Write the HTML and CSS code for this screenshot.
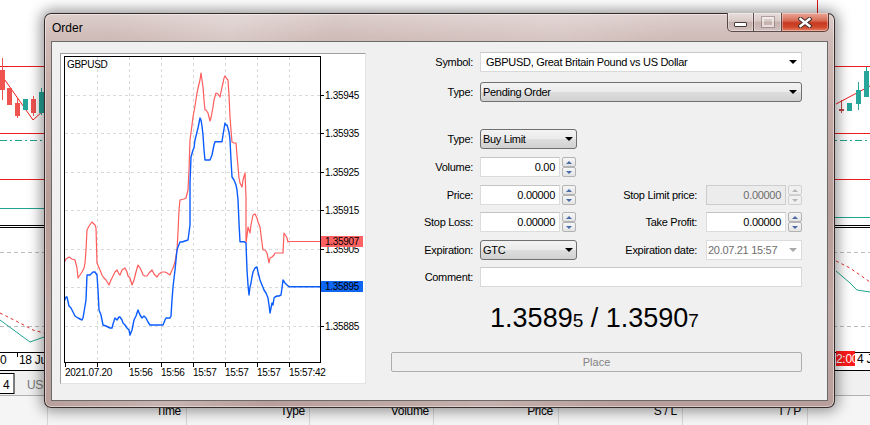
FILE: index.html
```html
<!DOCTYPE html>
<html>
<head>
<meta charset="utf-8">
<title>Order</title>
<link rel="stylesheet" href="styles.css">
</head>
<body>
<svg class="backdrop" width="870" height="425" viewBox="0 0 870 425">
  <rect width="870" height="425" fill="#fff"/>
  <line x1="817.5" y1="0" x2="817.5" y2="20" stroke="#e01515"/>
  <g stroke="#ee1c1c" fill="none">
    <line x1="0" y1="66.5" x2="870" y2="66.5"/>
    <line x1="0" y1="133.5" x2="870" y2="133.5"/>
    <line x1="0" y1="179.5" x2="870" y2="179.5"/>
    <polyline points="0,73 33,120 44,110"/>
    <polyline points="836,104 870,86"/>
  </g>
  <line x1="0" y1="140.5" x2="870" y2="140.5" stroke="#1fa58f" stroke-dasharray="7 3 2 3"/>
  <line x1="0" y1="208.5" x2="60" y2="208.5" stroke="#1fa58f"/>
  <line x1="820" y1="217.5" x2="870" y2="217.5" stroke="#1fa58f"/>
  <line x1="0" y1="225.5" x2="870" y2="225.5" stroke="#000"/>
  <line x1="0" y1="227.5" x2="870" y2="227.5" stroke="#000"/>
  <g stroke="#bdbdbd" stroke-dasharray="4 3">
    <line x1="0" y1="252.5" x2="870" y2="252.5"/>
    <line x1="0" y1="326.5" x2="870" y2="326.5"/>
  </g>
  <!-- left candles -->
  <g>
    <line x1="2.5" y1="58" x2="2.5" y2="100" stroke="#ef5350"/>
    <rect x="0" y="70" width="5" height="20" fill="#ef5350"/>
    <rect x="7" y="88" width="5" height="17" fill="#ef5350"/>
    <line x1="17.5" y1="98" x2="17.5" y2="118" stroke="#ef5350"/>
    <rect x="15" y="103" width="5" height="13" fill="#ef5350"/>
    <rect x="23" y="99" width="5" height="11" fill="#26a69a"/>
    <line x1="33.5" y1="96" x2="33.5" y2="116" stroke="#ef5350"/>
    <rect x="31" y="99" width="5" height="14" fill="#ef5350"/>
    <line x1="41.5" y1="88" x2="41.5" y2="115" stroke="#26a69a"/>
    <rect x="39" y="92" width="6" height="21" fill="#26a69a"/>
  </g>
  <!-- right candles -->
  <g>
    <line x1="841.5" y1="100" x2="841.5" y2="113" stroke="#b84545"/>
    <rect x="839" y="109" width="5" height="2" fill="#b84545"/>
    <rect x="847" y="103" width="5" height="8" fill="#26a69a"/>
    <line x1="858.5" y1="82" x2="858.5" y2="110" stroke="#26a69a"/>
    <rect x="856" y="90" width="5" height="14" fill="#26a69a"/>
    <line x1="866.5" y1="67" x2="866.5" y2="97" stroke="#26a69a"/>
    <rect x="864" y="71" width="5" height="26" fill="#26a69a"/>
  </g>
  <!-- indicator -->
  <g fill="none">
    <polyline points="0,313 10,318 20,323 33,330 44,333" stroke="#e53030" stroke-dasharray="3 3"/>
    <polyline points="836,261 850,268 870,282" stroke="#e53030" stroke-dasharray="3 3"/>
    <polyline points="0,320 15,331 30,342 44,337" stroke="#1fa58f"/>
    <polyline points="836,271 850,283 857,290 870,292" stroke="#1fa58f"/>
  </g>
  <line x1="0" y1="352.5" x2="870" y2="352.5" stroke="#000"/>
  <line x1="17.5" y1="352" x2="17.5" y2="357" stroke="#000"/>
  <text x="0" y="364" class="bgtxt">0</text>
  <text x="19" y="364" class="bgtxt">18 Jun</text>
  <rect x="836" y="351" width="19" height="15" fill="#ff1a1a"/>
  <text x="836" y="363" class="bgtxt" fill="#fff">2:00</text>
  <text x="857" y="363" class="bgtxt">4 Ju</text>
  <line x1="0" y1="370.5" x2="870" y2="370.5" stroke="#000"/>
  <rect x="0" y="371" width="870" height="24" fill="#f0f0f0"/>
  <rect x="-1" y="373.5" width="15" height="20" fill="#fff" stroke="#000"/>
  <text x="3" y="389" class="bgtxt">4</text>
  <text x="27" y="389" class="bgtxt" fill="#7a7a7a">USD</text>
  <rect x="0" y="395" width="870" height="30" fill="#f5f5f5"/>
  <line x1="0" y1="395.5" x2="870" y2="395.5" stroke="#b0b0b0"/>
  <g stroke="#d6d6d6">
    <line x1="47.5" y1="396" x2="47.5" y2="425"/>
    <line x1="186.5" y1="396" x2="186.5" y2="425"/>
    <line x1="309.5" y1="396" x2="309.5" y2="425"/>
    <line x1="433.5" y1="396" x2="433.5" y2="425"/>
    <line x1="558.5" y1="396" x2="558.5" y2="425"/>
    <line x1="682.5" y1="396" x2="682.5" y2="425"/>
    <line x1="807.5" y1="396" x2="807.5" y2="425"/>
  </g>
  <g class="bgtxt" text-anchor="end">
    <text x="181" y="415">Time</text>
    <text x="305" y="415">Type</text>
    <text x="429" y="415">Volume</text>
    <text x="553" y="415">Price</text>
    <text x="677" y="415">S / L</text>
    <text x="801" y="415">T / P</text>
  </g>
</svg>

<div class="window">
  <div class="titlebar">
    <span class="title">Order</span>
    <div class="caps">
      <div class="cap cap-min"><span class="glyph-min"></span></div>
      <div class="cap cap-max"><span class="glyph-max"></span></div>
      <div class="cap cap-close">
        <svg width="14" height="11" viewBox="0 0 14 11">
          <g stroke-linecap="square">
            <path d="M2.5 2 L11.5 9 M11.5 2 L2.5 9" stroke="#3a2a2a" stroke-width="4.2"/>
            <path d="M2.5 2 L11.5 9 M11.5 2 L2.5 9" stroke="#fff" stroke-width="2.4"/>
          </g>
        </svg>
      </div>
    </div>
  </div>
  <div class="client">
    <div class="chart">
      <svg width="304" height="329" viewBox="61 54 304 329">
        <defs>
          <clipPath id="plot"><rect x="65" y="57" width="255" height="305"/></clipPath>
        </defs>
        <rect x="64.5" y="56.5" width="256" height="306" fill="#fff" stroke="#000"/>
        <g stroke="#d9d9d9" stroke-dasharray="3 3">
          <line x1="97.5" y1="57" x2="97.5" y2="362"/>
          <line x1="129.5" y1="57" x2="129.5" y2="362"/>
          <line x1="161.5" y1="57" x2="161.5" y2="362"/>
          <line x1="193.5" y1="57" x2="193.5" y2="362"/>
          <line x1="225.5" y1="57" x2="225.5" y2="362"/>
          <line x1="257.5" y1="57" x2="257.5" y2="362"/>
          <line x1="289.5" y1="57" x2="289.5" y2="362"/>
          <line x1="65" y1="95.5" x2="320" y2="95.5"/>
          <line x1="65" y1="133.5" x2="320" y2="133.5"/>
          <line x1="65" y1="172.5" x2="320" y2="172.5"/>
          <line x1="65" y1="210.5" x2="320" y2="210.5"/>
          <line x1="65" y1="249.5" x2="320" y2="249.5"/>
          <line x1="65" y1="287.5" x2="320" y2="287.5"/>
          <line x1="65" y1="326.5" x2="320" y2="326.5"/>
        </g>
        <g stroke="#000">
          <line x1="321" y1="95.5" x2="324" y2="95.5"/>
          <line x1="321" y1="133.5" x2="324" y2="133.5"/>
          <line x1="321" y1="172.5" x2="324" y2="172.5"/>
          <line x1="321" y1="210.5" x2="324" y2="210.5"/>
          <line x1="321" y1="249.5" x2="324" y2="249.5"/>
          <line x1="321" y1="287.5" x2="324" y2="287.5"/>
          <line x1="321" y1="326.5" x2="324" y2="326.5"/>
          <line x1="65.5" y1="363" x2="65.5" y2="367"/>
          <line x1="97.5" y1="363" x2="97.5" y2="367"/>
          <line x1="129.5" y1="363" x2="129.5" y2="367"/>
          <line x1="161.5" y1="363" x2="161.5" y2="367"/>
          <line x1="193.5" y1="363" x2="193.5" y2="367"/>
          <line x1="225.5" y1="363" x2="225.5" y2="367"/>
          <line x1="257.5" y1="363" x2="257.5" y2="367"/>
          <line x1="289.5" y1="363" x2="289.5" y2="367"/>
        </g>
        <g class="ctxt">
          <text x="67" y="68">GBPUSD</text>
          <text x="325" y="99">1.35945</text>
          <text x="325" y="137">1.35935</text>
          <text x="325" y="176">1.35925</text>
          <text x="325" y="214">1.35915</text>
          <text x="325" y="253">1.35905</text>
          <text x="325" y="291">1.35895</text>
          <text x="325" y="330">1.35885</text>
          <text x="65" y="376">2021.07.20</text>
          <text x="129" y="376">15:56</text>
          <text x="161" y="376">15:56</text>
          <text x="193" y="376">15:57</text>
          <text x="225" y="376">15:57</text>
          <text x="257" y="376">15:57</text>
          <text x="289" y="376">15:57:42</text>
        </g>
        <g clip-path="url(#plot)" fill="none" stroke-linejoin="round">
          <polyline stroke="#ff5c5c" stroke-width="1.2" points="64,263 66,259 69,257 72,259 75,260 77,268 78,278 80,275 82,272 84,268 85,263 86,250 87,230 89,226 92,222 95,225 96,228 97,263 100,270 102,275 104,278 106,280 109,285 111,280 113,276 115,272 117,270 119,274 120,275 122,270 125,268 127,272 128,276 130,278 132,285 134,280 136,272 138,265 140,268 142,272 143,275 145,276 147,276 149,273 152,270 154,274 157,277 159,274 162,272 165,272 167,273 170,275 172,270 173,268 175,262 177,250 178,232 179,210 180,200 184,199 186,198 188,190 189,170 190,140 192,125 193,117 195,106 197,93 199,84 200,80 201,73 202,80 203,87 204,100 205,110 206,110 208,113 210,121 211,118 213,107 214,100 216,93 218,94 220,97 221,92 223,83 224,78 225,76 227,79 228,80 229,95 230,117 231,130 232,142 234,143 236,143 237,155 238,167 239,178 240,183 242,187 243,180 245,173 246,197 246,243 247,236 248,227 249,230 250,233 251,225 253,215 255,214 257,218 258,222 260,227 261,235 262,243 263,250 265,250 267,253 268,258 269,263 270,258 272,257 274,255 275,253 280,253 283,253 284,233 286,236 287,238 288,242 290,241.5 320,241.5"/>
          <polyline stroke="#0a5cff" stroke-width="1.4" points="64,301.7 66,297 67,297 69,306 71,308 73,312 75,316 78,318 82,320 83,318 85,306 86,300 87,275 90,275 93,272 95,272 97,275 98,290 99,310 101,315 103,325 106,326 110,328 112,328 113,324 115,318 117,320 119,317 120,317 122,320 123,323 125,325 127,328 129,330 130,335 132,330 134,320 136,316 138,310 140,315 142,318 144,316 146,318 148,322 150,325 155,325 160,325 163,325 165,320 166,318 170,318 171,316 172,300 173,287 175,270 177,250 178,247 180,242 182,242 185,241 188,240 190,225 190,183 191,157 193,150 194,148 195,140 197,132 198,128 200,118 201,120 202,126 203,135 204,150 205,160 210,160 212,155 214,145 215,141.7 222,141.7 223,135 225,123 226,125 227,125 229,132 230,140 231,160 232,177 234,180 236,185 237,190 238,200 239,223 240,241.7 244,241.7 246,243 247,270 248,285 249,295 250,287 251,283 252,277 253,272 255,268 257,267 258,272 260,280 262,285 264,290 266,293 268,298 269,305 270,313 271,308 272,303 273,305 274,298 275,297 277,296 279,296 281,295 282,288 283,280 285,283 287,285 289,286.7 320,286.7"/>
        </g>
        <rect x="321" y="236" width="42" height="11" fill="#ff6262"/>
        <text x="325" y="245" class="ctxt" fill="#fff">1.35907</text>
        <rect x="321" y="281" width="42" height="11" fill="#0f66f2"/>
        <text x="325" y="290" class="ctxt" fill="#fff">1.35895</text>
      </svg>
    </div>

    <div class="form">
      <div class="row">
        <span class="lbl">Symbol:</span>
        <div class="combo"><span>GBPUSD, Great Britain Pound vs US Dollar</span><i class="arr"></i></div>
      </div>
      <div class="row g10">
        <span class="lbl">Type:</span>
        <div class="drop wide"><span>Pending Order</span><i class="arr"></i></div>
      </div>
      <div class="row g27">
        <span class="lbl">Type:</span>
        <div class="drop"><span>Buy Limit</span><i class="arr"></i></div>
      </div>
      <div class="row">
        <span class="lbl">Volume:</span>
        <div class="cell"><div class="num">0.00</div><div class="spin"><span><i class="up"></i></span><span><i class="dn"></i></span></div></div>
      </div>
      <div class="row">
        <span class="lbl">Price:</span>
        <div class="cell"><div class="num">0.00000</div><div class="spin"><span><i class="up"></i></span><span><i class="dn"></i></span></div></div>
        <span class="lbl2">Stop Limit price:</span>
        <div class="cell"><div class="num dis">0.00000</div><div class="spin dis"><span><i class="up"></i></span><span><i class="dn"></i></span></div></div>
      </div>
      <div class="row g7">
        <span class="lbl">Stop Loss:</span>
        <div class="cell"><div class="num">0.00000</div><div class="spin"><span><i class="up"></i></span><span><i class="dn"></i></span></div></div>
        <span class="lbl2">Take Profit:</span>
        <div class="cell"><div class="num">0.00000</div><div class="spin"><span><i class="up"></i></span><span><i class="dn"></i></span></div></div>
      </div>
      <div class="row">
        <span class="lbl">Expiration:</span>
        <div class="drop"><span>GTC</span><i class="arr"></i></div>
        <span class="lbl2">Expiration date:</span>
        <div class="datebox"><span>20.07.21 15:57</span><i class="arr"></i></div>
      </div>
      <div class="row g7">
        <span class="lbl">Comment:</span>
        <div class="combo"></div>
      </div>
      <div class="quote">1.3589<small>5</small> / 1.3590<small>7</small></div>
      <div class="place">Place</div>
    </div>
  </div>
</div>
</body>
</html>
```

FILE: styles.css
```css
html, body {
  margin: 0;
  padding: 0;
}
body {
  width: 870px;
  height: 425px;
  overflow: hidden;
  position: relative;
  background: #fff;
  font-family: "Liberation Sans", Arial, sans-serif;
  font-size: 11px;
  letter-spacing: -0.3px;
  color: #000;
}
.backdrop {
  display: block;
}
.bgtxt {
  font-family: "Liberation Sans", Arial, sans-serif;
  font-size: 12px;
  letter-spacing: -0.3px;
}

/* window frame */
.window {
  position: absolute;
  left: 44px;
  top: 13px;
  width: 791px;
  height: 395px;
  box-sizing: border-box;
  border: 1px solid rgba(40, 28, 28, 0.9);
  border-radius: 7px;
  background:
    linear-gradient(100deg, rgba(255,255,255,0) 8%, rgba(255,255,255,0.22) 22%, rgba(255,255,255,0) 34%, rgba(255,255,255,0.18) 60%, rgba(255,255,255,0) 75%),
    linear-gradient(180deg, #ddcfcc 0%, #cfbbb7 6%, #c3aaa6 25%, #b69c97 50%, #c0a8a4 75%, #b89f9b 100%);
  box-shadow: 0 0 14px 3px rgba(0, 0, 0, 0.42), inset 0 0 0 1px rgba(255, 255, 255, 0.45);
  display: flex;
  flex-direction: column;
}
.titlebar {
  height: 27px;
  flex: none;
  position: relative;
  display: flex;
  align-items: center;
  padding-left: 7px;
  padding-top: 1px;
  box-sizing: border-box;
}
.title {
  font-size: 12px;
  letter-spacing: 0;
  color: #000;
}
.caps {
  position: absolute;
  top: -1px;
  right: 5px;
  display: flex;
  height: 19px;
}
.cap {
  box-sizing: border-box;
  height: 19px;
  border: 1px solid rgba(60, 40, 40, 0.8);
  border-top: none;
  display: flex;
  align-items: center;
  justify-content: center;
  box-shadow: inset 0 0 0 1px rgba(255, 255, 255, 0.35);
}
.cap-min {
  width: 27px;
  border-radius: 0 0 0 5px;
  background: linear-gradient(#e8dedc, #d8c9c6 45%, #c5b0ac 52%, #d2c1be);
}
.cap-max {
  width: 28px;
  border-left: none;
  background: linear-gradient(#e8dedc, #d8c9c6 45%, #c5b0ac 52%, #d2c1be);
}
.cap-close {
  width: 47px;
  border-left: none;
  border-radius: 0 0 5px 0;
  background: linear-gradient(#eaa899 0%, #d86c55 42%, #c73a20 55%, #d0472b 78%, #e48467 100%);
}
.glyph-min {
  display: block;
  width: 11px;
  height: 3px;
  margin-top: 5px;
  background: #fff;
  border: 1px solid #4a3a3a;
  border-radius: 1px;
}
.glyph-max {
  display: block;
  width: 8px;
  height: 6px;
  border: 2px solid rgba(255, 255, 255, 0.55);
  outline: 1px solid rgba(120, 95, 95, 0.45);
}

/* client area */
.client {
  flex: none;
  margin: 0 6px 6px;
  height: 360px;
  box-sizing: border-box;
  border: 1px solid #6a6a6a;
  background: #f0f0f0;
  display: flex;
  align-items: flex-start;
}
.chart {
  flex: none;
  margin: 11px 0 0 8px;
  width: 306px;
  height: 331px;
  box-sizing: border-box;
  border: 1px solid;
  border-color: #a0a0a0 #e3e3e3 #e3e3e3 #a0a0a0;
  background: #fff;
}
.chart svg {
  display: block;
}
.ctxt {
  font-family: "Liberation Sans", Arial, sans-serif;
  font-size: 10px;
  letter-spacing: -0.3px;
  fill: #000;
}

/* form */
.form {
  flex: none;
  margin: 10px 0 0 25px;
  width: 411px;
  display: flex;
  flex-direction: column;
}
.row {
  display: flex;
  align-items: center;
  height: 20px;
  margin-top: 8px;
}
.row:first-child {
  margin-top: 0;
}
.row.g10 { margin-top: 10px; }
.row.g27 { margin-top: 27px; }
.row.g7 { margin-top: 7px; }
.lbl {
  flex: none;
  width: 89px;
  box-sizing: border-box;
  padding-right: 7px;
  text-align: right;
}
.lbl2 {
  flex: none;
  width: 129px;
  box-sizing: border-box;
  padding-right: 9px;
  text-align: right;
}
.cell {
  flex: none;
  width: 97px;
  display: flex;
}
.arr {
  display: block;
  width: 0;
  height: 0;
  margin-left: auto;
  border-left: 4px solid transparent;
  border-right: 4px solid transparent;
  border-top: 4px solid #000;
}
.combo {
  flex: none;
  width: 322px;
  height: 20px;
  box-sizing: border-box;
  border: 1px solid #d9d9d9;
  border-top-color: #c8c8c8;
  background: #fff;
  display: flex;
  align-items: center;
  padding: 0 4px 0 5px;
}
.drop {
  flex: none;
  width: 97px;
  height: 20px;
  box-sizing: border-box;
  border: 1px solid #707070;
  border-radius: 3px;
  background: linear-gradient(#f3f3f3, #ebebeb 48%, #dddddd 52%, #d1d1d1);
  display: flex;
  align-items: center;
  padding: 0 3px 0 2px;
}
.drop.wide {
  width: 322px;
  padding-right: 4px;
}
.num {
  flex: none;
  width: 80px;
  height: 20px;
  box-sizing: border-box;
  border: 1px solid #dcdcdc;
  border-top-color: #c4c4c4;
  background: #fff;
  text-align: right;
  padding-right: 4px;
  line-height: 18px;
}
.num.dis {
  background: #ececec;
  border-color: #cdcdcd;
  color: #6d6d6d;
}
.spin {
  flex: none;
  width: 14px;
  height: 20px;
  margin-left: 2px;
  display: flex;
  flex-direction: column;
}
.spin span {
  flex: 1;
  box-sizing: border-box;
  border: 1px solid #b3b3b3;
  border-radius: 2px;
  background: linear-gradient(#f7f7f7, #e3e3e3);
  display: flex;
  align-items: center;
  justify-content: center;
}
.spin .up {
  display: block;
  width: 0;
  height: 0;
  border-left: 3px solid transparent;
  border-right: 3px solid transparent;
  border-bottom: 3px solid #4a6aa8;
}
.spin .dn {
  display: block;
  width: 0;
  height: 0;
  border-left: 3px solid transparent;
  border-right: 3px solid transparent;
  border-top: 3px solid #4a6aa8;
}
.spin.dis span {
  border-color: #d0d0d0;
  background: #f0f0f0;
}
.spin.dis .up { border-bottom-color: #b5b5b5; }
.spin.dis .dn { border-top-color: #b5b5b5; }
.datebox {
  flex: none;
  width: 96px;
  height: 20px;
  box-sizing: border-box;
  border: 1px solid #dcdcdc;
  background: #fff;
  color: #6d6d6d;
  display: flex;
  align-items: center;
  padding: 0 4px 0 1px;
}
.datebox .arr {
  border-top-color: #a8a8a8;
}
.quote {
  margin-top: 15px;
  height: 32px;
  line-height: 32px;
  font-size: 27px;
  letter-spacing: 0;
  text-align: center;
  padding-right: 4px;
  color: #000;
}
.quote small {
  font-size: 19px;
}
.place {
  margin-top: 18px;
  height: 20px;
  box-sizing: border-box;
  border: 1px solid #adadad;
  border-radius: 2px;
  background: #efefef;
  color: #838383;
  text-align: center;
  line-height: 18px;
  letter-spacing: 0;
}
```
